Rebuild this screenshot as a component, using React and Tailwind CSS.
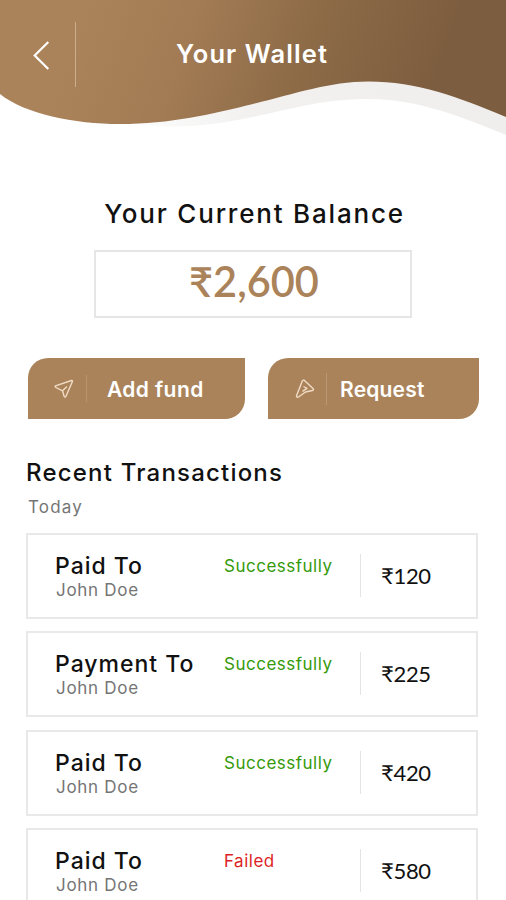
import React from 'react';

const transactions = [
    { id: 1, title: 'Paid To', name: 'John Doe', status: 'Successfully', amount: '₹120' },
    { id: 2, title: 'Payment To', name: 'John Doe', status: 'Successfully', amount: '₹225' },
    { id: 3, title: 'Paid To', name: 'John Doe', status: 'Successfully', amount: '₹420' },
    { id: 4, title: 'Paid To', name: 'John Doe', status: 'Failed', amount: '₹580' },
];

const Header = () => (
    <header className="relative h-[140px] overflow-hidden">
        <svg className="absolute inset-0" width="506" height="140" viewBox="0 0 506 140" fill="none">
            <defs>
                <linearGradient id="wave" x1="90" y1="0" x2="422" y2="120" gradientUnits="userSpaceOnUse">
                    <stop offset="0" stopColor="#ab835a" />
                    <stop offset="0.3" stopColor="#a27b54" />
                    <stop offset="0.62" stopColor="#8d6b47" />
                    <stop offset="1" stopColor="#7d5d3f" />
                </linearGradient>
                <linearGradient id="shade" x1="140" y1="0" x2="506" y2="0" gradientUnits="userSpaceOnUse">
                    <stop offset="0" stopColor="#fcfcfc" />
                    <stop offset="0.3" stopColor="#f2f1f0" />
                    <stop offset="1" stopColor="#f0eeec" />
                </linearGradient>
            </defs>
            <path d="M130 123C175 131 219 124 253 117C295 108 325 99 368 99C415 99 458 115 506 135V60H130Z" fill="url(#shade)" />
            <path d="M0 0H506V117C458 97 418 81.500 368 81.500C330 81.500 294 94 253 104C213 114 170 124 120 124C74 124 25 114 0 94Z" fill="url(#wave)" />
        </svg>
        <div className="relative flex items-center h-[109px]">
            <button className="ml-[33px] text-white" aria-label="Back">
                <svg width="17" height="30" viewBox="0 0 17 30" fill="none" stroke="currentColor" strokeWidth="2.2">
                    <path d="M15.300 2L1.700 15.500L15.300 29" />
                </svg>
            </button>
            <span className="ml-[25px] w-px h-[65px] bg-[#cbae90]" />
            <h1 className="ml-[100px] text-white text-[25.5px] font-semibold tracking-[1.1px] whitespace-nowrap">Your Wallet</h1>
        </div>
    </header>
);

const TransactionCard = ({ item }) => (
    <div className="flex h-[86px] border-2 border-[#e9e9e9]">
        <div className="w-[196px] shrink-0 pl-[27px] pt-[18px] whitespace-nowrap">
            <h3 className="text-[23px] leading-[26px] font-medium tracking-[1px] text-[#111]">{item.title}</h3>
            <p className="ml-px text-[17px] leading-[22px] text-[#757575] tracking-[0.7px]">{item.name}</p>
        </div>
        <p
            className={`w-[135.5px] shrink-0 pt-[20px] text-[17px] leading-[22px] tracking-[0.5px] ${
                item.status === 'Failed' ? 'text-[#dc1f26]' : 'text-[#369a0b]'
            }`}
        >
            {item.status}
        </p>
        <span className="w-px h-[43px] mt-[19px] bg-[#e4e4e4]" />
        <p className="ml-[20.5px] mt-[24px] leading-[34px] font-['Lato',sans-serif] text-[22px] tracking-[-0.3px] text-[#111]">
            {item.amount}
        </p>
    </div>
);

const App = () => {
    return (
        <div className="w-[506px] h-[900px] overflow-hidden bg-white font-['Inter',sans-serif]">
            <Header />

            {/* Balance */}
            <section className="flex flex-col items-center pt-[58px]">
                <h2 className="pl-[3px] text-[26px] leading-[32px] font-medium tracking-[1.8px] text-[#111] whitespace-nowrap">
                    Your Current Balance
                </h2>
                <div className="mt-[20px] w-[318px] h-[68px] border-2 border-[#e6e6e6] flex items-start justify-center">
                    <span className="pl-[2px] font-['Lato',sans-serif] text-[41.5px] leading-[58px] font-semibold text-[#ab835a]">₹2,600</span>
                </div>
            </section>

            {/* Actions */}
            <div className="flex mt-[40px] ml-[28px] gap-6 text-white">
                <button className="flex items-center w-[217px] h-[61px] bg-[#ab835a] rounded-tl-[20px] rounded-br-[20px]">
                    <svg className="ml-[26px]" width="20" height="20" viewBox="0 0 20 20" fill="none" stroke="#f0dcc6" strokeWidth="1.4" strokeLinejoin="round">
                        <path d="M1.500 6.800L17.500 1.500C18.300 1.300 18.700 1.900 18.300 2.700L12 17.300C11.500 18.500 10.500 18.300 10.100 17.200L8.500 11.800L2 8.500C1 8 .8 7.100 1.500 6.800ZM8.500 11.800L13 7.500" />
                    </svg>
                    <span className="ml-[12px] w-px h-[27px] bg-[#b8946f]" />
                    <span className="ml-[20px] mt-[2px] text-[21px] font-semibold tracking-[0.4px] whitespace-nowrap">Add fund</span>
                </button>
                <button className="-ml-px flex items-center w-[211px] h-[61px] bg-[#ab835a] rounded-tl-[20px] rounded-br-[20px]">
                    <svg className="ml-[27px]" width="20" height="20" viewBox="0 0 20 20" fill="none" stroke="#f0dcc6" strokeWidth="1.4" strokeLinejoin="round">
                        <path d="M1.600 16.500L7.300 2C7.800.8 9 .8 9.700 1.800L18 9.500C19 10.500 18.500 11.300 17.400 11.500L10.500 13L3.500 18C2.100 18.800 1.200 17.700 1.600 16.500ZM7.500 12.300L12 9.300L8.500 7.500" />
                    </svg>
                    <span className="ml-[11px] w-px h-[32px] bg-[#bb9874]" />
                    <span className="ml-[13px] mt-[2px] text-[21px] font-semibold tracking-[0.2px] whitespace-nowrap">Request</span>
                </button>
            </div>

            {/* Transactions */}
            <section className="mt-[38px] ml-[26px] w-[452px]">
                <h2 className="text-[24px] leading-[32px] font-medium tracking-[1.2px] text-[#111] whitespace-nowrap">
                    Recent Transactions
                </h2>
                <p className="mt-[7px] ml-[2px] text-[17px] leading-[22px] text-[#757575] tracking-[1.2px]">Today</p>
                <div className="mt-[15px] flex flex-col gap-[12.4px]">
                    {transactions.map((item) => (
                        <TransactionCard key={item.id} item={item} />
                    ))}
                </div>
            </section>
        </div>
    );
};

export default App;
